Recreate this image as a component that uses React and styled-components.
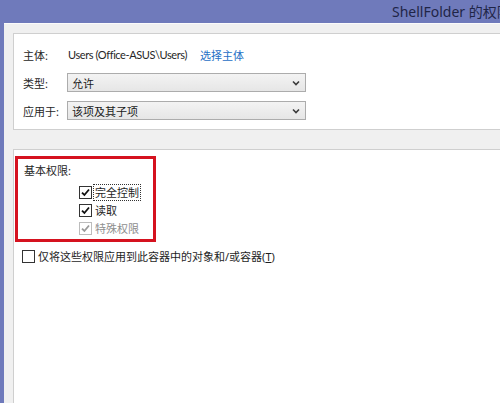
import React from "react"
import styled, { createGlobalStyle } from "styled-components"

const GlobalStyle = createGlobalStyle`
  html, body {
    margin: 0;
    padding: 0;
    background: #f0f0f0;
  }
  body {
    font-family: "Noto Sans", "Noto Sans CJK SC", sans-serif;
    font-size: 11px;
    color: #1e1e1e;
  }
`

const Window = styled.div`
  width: 500px;
  height: 403px;
  display: flex;
  flex-direction: column;
  overflow: hidden;
  background: #6f7abb;
`

const TitleBar = styled.div`
  height: 23px;
  flex: none;
  display: flex;
  align-items: center;
  padding-left: 7px;
  white-space: nowrap;
`

const Title = styled.div`
  margin-left: 385px;
  font-family: "Noto Sans", "Noto Sans CJK SC", sans-serif;
  font-size: 14px;
  color: #1f2547;
  line-height: 23px;
`

const Frame = styled.div`
  flex: 1;
  display: flex;
  min-height: 0;
`

const Client = styled.div`
  flex: 1;
  margin-left: 4px;
  background: #f0f0f0;
  border-top: 1px solid #fbfbfb;
  padding: 9px 0 0 9px;
  display: flex;
  flex-direction: column;
  overflow: hidden;
`

const Panel = styled.div`
  width: 620px;
  background: #fff;
  border: 1px solid #cfcfcf;
  border-right: none;
  ${(p) => p.$grow && "flex: 1; border-bottom: none;"}
  ${(p) => p.$gap && `margin-top: ${p.$gap}px;`}
`

const FieldGrid = styled.div`
  display: grid;
  grid-template-columns: 45px auto;
  grid-auto-rows: 19px;
  row-gap: 9px;
  padding: 11px 0 9px 9px;
  align-items: center;
  justify-items: start;
`

const Label = styled.span`
  color: #262626;
`

const Value = styled.span`
  display: flex;
  align-items: center;
  gap: 13px;
  color: #262626;
  font-family: "Lato", "Noto Sans CJK SC", sans-serif;
  font-size: 11px;
  letter-spacing: -0.4px;
`

const Link = styled.span`
  color: #1f6fc5;
  font-family: "Noto Sans", "Noto Sans CJK SC", sans-serif;
  font-size: 11px;
  letter-spacing: 0;
`

const Select = styled.div`
  width: 239px;
  height: 19px;
  box-sizing: border-box;
  margin-left: -1px;
  border: 1px solid #acacac;
  background: linear-gradient(#f3f3f3, #e6e6e6);
  display: flex;
  align-items: center;
  justify-content: space-between;
  padding: 0 5px 0 4px;
  color: #1a1a1a;
`

const Chevron = () => (
  <svg width="8" height="6" viewBox="0 0 8 6">
    <path d="M1 1.5 L4 4.5 L7 1.5" fill="none" stroke="#3a3a3a" strokeWidth="1.6" />
  </svg>
)

const GroupBox = styled.div`
  width: 141px;
  height: 86px;
  box-sizing: border-box;
  margin: 6px 0 0 1px;
  border: 3px solid #d5121f;
  padding: 5px 0 0 6px;
`

const GroupTitle = styled.div`
  line-height: 14px;
  color: #262626;
  margin-bottom: 5px;
`

const CheckList = styled.div`
  display: flex;
  flex-direction: column;
  padding-left: 55px;
`

const CheckRow = styled.label`
  display: flex;
  align-items: center;
  gap: 1px;
  height: 18px;
  color: ${(p) => (p.$disabled ? "#8e8e8e" : "#1e1e1e")};
  ${(p) => p.$indent && `padding-left: ${p.$indent}px;`}
  ${(p) => p.$top && `margin-top: ${p.$top}px;`}
`

const Box = styled.span`
  width: 11px;
  height: 11px;
  flex: none;
  background: #fff;
  border: 1px solid ${(p) => (p.$disabled ? "#bcbcbc" : "#333")};
  display: flex;
  align-items: center;
  justify-content: center;
`

const CheckText = styled.span`
  padding: 0 1px;
  line-height: 15px;
  border: 1px ${(p) => (p.$focus ? "dotted #333" : "solid transparent")};
  u {
    text-decoration: underline;
  }
`

const Check = ({ on, disabled }) => (
  <Box $disabled={disabled}>
    {on && (
      <svg width="9" height="9" viewBox="0 0 9 9">
        <path d="M1 4.6 L3.4 7 L8 1.5" fill="none" stroke={disabled ? "#9a9a9a" : "#111"} strokeWidth="1.8" />
      </svg>
    )}
  </Box>
)

const FolderIcon = () => (
  <svg width="11" height="13" viewBox="0 0 11 13">
    <path d="M0.5 1 H4 L5 2.5 H10.5 V12.5 H0.5 Z" fill="#e2b53d" />
    <path d="M2.5 3 H10.5 V12.5 H2.5 Z" fill="#f6dc7a" />
    <path d="M0.5 1 V12.5" stroke="#b8891f" strokeWidth="1" />
  </svg>
)

export default function App() {
  return (
    <>
      <GlobalStyle />
      <Window>
        <TitleBar>
          <FolderIcon />
          <Title>ShellFolder 的权限项目</Title>
        </TitleBar>
        <Frame>
          <Client>
            <Panel>
              <FieldGrid>
                <Label>主体:</Label>
                <Value>
                  Users (Office-ASUS\Users)
                  <Link>选择主体</Link>
                </Value>
                <Label>类型:</Label>
                <Select>
                  允许
                  <Chevron />
                </Select>
                <Label>应用于:</Label>
                <Select>
                  该项及其子项
                  <Chevron />
                </Select>
              </FieldGrid>
            </Panel>
            <Panel $grow $gap={19}>
              <GroupBox>
                <GroupTitle>基本权限:</GroupTitle>
                <CheckList>
                  <CheckRow>
                    <Check on />
                    <CheckText $focus>完全控制</CheckText>
                  </CheckRow>
                  <CheckRow>
                    <Check on />
                    <CheckText>读取</CheckText>
                  </CheckRow>
                  <CheckRow $disabled>
                    <Check on disabled />
                    <CheckText>特殊权限</CheckText>
                  </CheckRow>
                </CheckList>
              </GroupBox>
              <CheckRow $indent={8} $top={5}>
                <Check />
                <CheckText>
                  仅将这些权限应用到此容器中的对象和/或容器(<u>T</u>)
                </CheckText>
              </CheckRow>
            </Panel>
          </Client>
        </Frame>
      </Window>
    </>
  )
}
